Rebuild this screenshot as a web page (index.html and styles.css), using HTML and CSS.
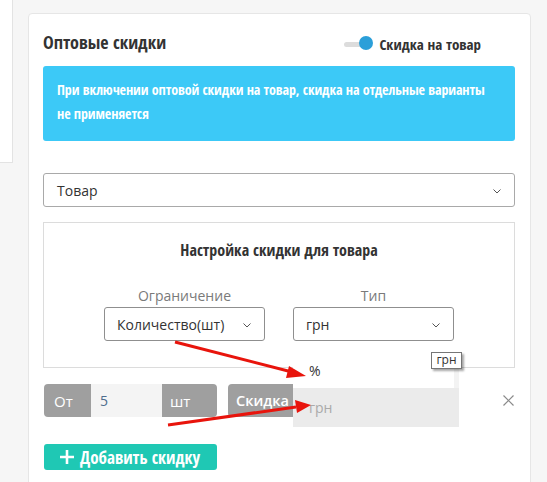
FILE: index.html
```html
<!DOCTYPE html>
<html lang="ru">
<head>
<meta charset="utf-8">
<title>Оптовые скидки</title>
<link rel="stylesheet" href="styles.css">
</head>
<body>
<div class="page">
  <aside class="sidebar"></aside>
  <section class="card">
    <div class="card-head">
      <h2 class="title">Оптовые скидки</h2>
      <div class="toggle">
        <span class="track"></span><span class="knob"></span>
        <span class="toggle-label">Скидка на товар</span>
      </div>
    </div>
    <div class="alert">При включении оптовой скидки на товар, скидка на отдельные варианты не применяется</div>
    <div class="select select-wide">
      <span>Товар</span>
      <svg class="chev" width="8" height="5" viewBox="0 0 8 5"><path d="M0.5 0.5 L4 4 L7.5 0.5" fill="none" stroke="#555" stroke-width="1"/></svg>
    </div>
    <div class="settings">
      <h3 class="settings-title">Настройка скидки для товара</h3>
      <div class="fields">
        <div class="field">
          <div class="field-label">Ограничение</div>
          <div class="select select-narrow">
            <span>Количество(шт)</span>
            <svg class="chev" width="8" height="5" viewBox="0 0 8 5"><path d="M0.5 0.5 L4 4 L7.5 0.5" fill="none" stroke="#555" stroke-width="1"/></svg>
          </div>
        </div>
        <div class="field">
          <div class="field-label">Тип</div>
          <div class="select select-narrow">
            <span>грн</span>
            <svg class="chev" width="8" height="5" viewBox="0 0 8 5"><path d="M0.5 0.5 L4 4 L7.5 0.5" fill="none" stroke="#555" stroke-width="1"/></svg>
          </div>
        </div>
      </div>
    </div>
    <div class="row">
      <div class="group">
        <span class="addon addon-from">От</span>
        <span class="input input-qty">5</span>
        <span class="addon addon-unit">шт</span>
      </div>
      <div class="group group-discount">
        <span class="addon addon-discount">Скидка</span>
        <span class="input input-discount"></span>
      </div>
      <span class="remove">
        <svg width="11" height="11" viewBox="0 0 11 11"><path d="M0.5 0.5 L10.5 10.5 M10.5 0.5 L0.5 10.5" stroke="#8a8a8a" stroke-width="1.2" fill="none"/></svg>
      </span>
    </div>
    <button class="add">
      <svg class="plus" width="14" height="14" viewBox="0 0 14 14"><path d="M7 0 V14 M0 7 H14" stroke="#fff" stroke-width="2.6"/></svg>
      <span>Добавить скидку</span>
    </button>
  </section>
</div>

<ul class="dropdown">
  <li class="opt opt-first">%</li>
  <li class="opt opt-active">грн</li>
</ul>
<div class="tooltip">грн</div>

<svg class="arrows" width="547" height="482" viewBox="0 0 547 482">
  <line x1="175" y1="342" x2="292" y2="372" stroke="#e8140c" stroke-width="3"/>
  <polygon points="306,376 289,366 286,378" fill="#e8140c"/>
  <line x1="168" y1="425" x2="296" y2="407" stroke="#e8140c" stroke-width="3"/>
  <polygon points="311,405 295,400 297,413" fill="#e8140c"/>
</svg>
</body>
</html>
```

FILE: styles.css
```css
* { box-sizing: border-box; }

html, body {
  margin: 0;
  padding: 0;
}

body {
  width: 547px;
  height: 482px;
  overflow: hidden;
  position: relative;
  background: #f6f6f6;
  font-family: "Open Sans", "Liberation Sans", sans-serif;
  font-size: 14px;
  color: #333;
}

.page {
  display: flex;
  align-items: flex-start;
}

.sidebar {
  width: 13px;
  height: 163px;
  background: #fff;
  border-right: 1px solid #e3e3e3;
  border-bottom: 1px solid #e3e3e3;
  flex: none;
}

.card {
  margin-left: 15px;
  margin-top: 13px;
  width: 503px;
  background: #fff;
  border: 1px solid #e6e6e6;
  border-radius: 4px;
  padding: 16px 15px 40px 14px;
  flex: none;
}

.card-head {
  display: flex;
  justify-content: space-between;
  align-items: center;
  height: 24px;
}

.title {
  margin: 0;
  font-family: "Open Sans Condensed", "Open Sans", sans-serif;
  font-stretch: condensed;
  font-weight: 700;
  font-size: 18px;
  line-height: 24px;
  color: #333;
}

.toggle {
  display: flex;
  align-items: center;
  margin-right: 34px;
  margin-top: 4px;
}

.track {
  width: 20px;
  height: 5px;
  background: #dcdcdc;
  border-radius: 3px;
}

.knob {
  width: 14px;
  height: 14px;
  border-radius: 50%;
  background: #2b9fd9;
  margin-left: -5px;
  margin-top: -2px;
}

.toggle-label {
  margin-left: 6px;
  font-family: "Open Sans Condensed", "Open Sans", sans-serif;
  font-stretch: condensed;
  font-weight: 700;
  font-size: 15px;
  line-height: 20px;
  color: #333;
}

.alert {
  margin-top: 12px;
  background: #3cc9f7;
  border-radius: 3px;
  padding: 12px 14px 15px;
  color: #fff;
  font-family: "Open Sans Condensed", "Open Sans", sans-serif;
  font-stretch: condensed;
  font-weight: 700;
  font-size: 14px;
  letter-spacing: -0.1px;
  line-height: 24px;
}

.select {
  display: flex;
  align-items: center;
  justify-content: space-between;
  height: 34px;
  background: #fff;
  border: 1px solid #a9a9a9;
  border-radius: 3px;
  font-size: 14px;
  color: #333;
}

.select-wide {
  margin-top: 32px;
  padding: 0 13px 0 13px;
}

.select-narrow {
  width: 161px;
  padding: 0 13px 0 12px;
  border-color: #8f8f8f;
}

.chev { flex: none; margin-top: 2px; }

.settings {
  margin-top: 15px;
  border: 1px solid #dcdcdc;
  padding: 15px 0 24px;
  height: 146px;
}

.settings-title {
  margin: 0;
  text-align: center;
  font-family: "Open Sans Condensed", "Open Sans", sans-serif;
  font-stretch: condensed;
  font-weight: 700;
  font-size: 16px;
  line-height: 24px;
  color: #333;
}

.fields {
  display: flex;
  justify-content: center;
  gap: 28px;
  margin-top: 24px;
}

.field {
  display: flex;
  flex-direction: column;
  align-items: center;
}

.field-label {
  font-size: 14px;
  line-height: 20px;
  color: #7a7a7a;
  margin-bottom: 1px;
}

.row {
  display: flex;
  align-items: center;
  margin-top: 16px;
  height: 33px;
}

.group {
  display: flex;
  height: 33px;
  border-radius: 4px;
  overflow: hidden;
  margin-left: 1px;
}

.group-discount { margin-left: 11px; }

.addon {
  display: flex;
  align-items: center;
  background: #9f9f9f;
  color: #fff;
  font-size: 15px;
}

.addon-from { width: 47px; padding-left: 10px; }
.addon-unit { width: 55px; padding-left: 8px; }
.addon-discount { width: 72px; padding-left: 8px; font-weight: 600; font-size: 14.5px; }

.input {
  display: flex;
  align-items: center;
  background: #f4f4f4;
  color: #4e6c8c;
  font-size: 14px;
}

.input-qty { width: 71px; padding-left: 9px; }
.input-discount { width: 130px; }

.remove {
  margin-left: auto;
  margin-right: 1px;
  display: flex;
}

.add {
  display: flex;
  align-items: center;
  margin-top: 27px;
  margin-left: 1px;
  width: 173px;
  height: 26px;
  border: 0;
  border-radius: 3px;
  background: #1fc8b4;
  color: #fff;
  padding: 0 0 0 16px;
  font-family: "Open Sans Condensed", "Open Sans", sans-serif;
  font-stretch: condensed;
  font-weight: 700;
  font-size: 17px;
}

.plus { margin-right: 6px; }

.dropdown {
  position: absolute;
  left: 293px;
  top: 353px;
  width: 166px;
  margin: 0;
  padding: 0;
  list-style: none;
  background: #f3f3f3;
}

.opt {
  padding-left: 16px;
  font-size: 14px;
  display: flex;
  align-items: center;
}

.opt-first {
  width: 161px;
  height: 35px;
  background: #fff;
  color: #333;
}

.opt-active {
  height: 39px;
  background: #ebebeb;
  color: #aaa;
}

.tooltip {
  position: absolute;
  left: 431px;
  top: 352px;
  width: 31px;
  height: 17px;
  border: 1px solid #767676;
  background: #fff;
  font-size: 12px;
  line-height: 14px;
  text-align: center;
  color: #333;
  box-shadow: 2px 2px 2px rgba(0, 0, 0, 0.35);
}

.arrows {
  position: absolute;
  left: 0;
  top: 0;
  pointer-events: none;
}
```
